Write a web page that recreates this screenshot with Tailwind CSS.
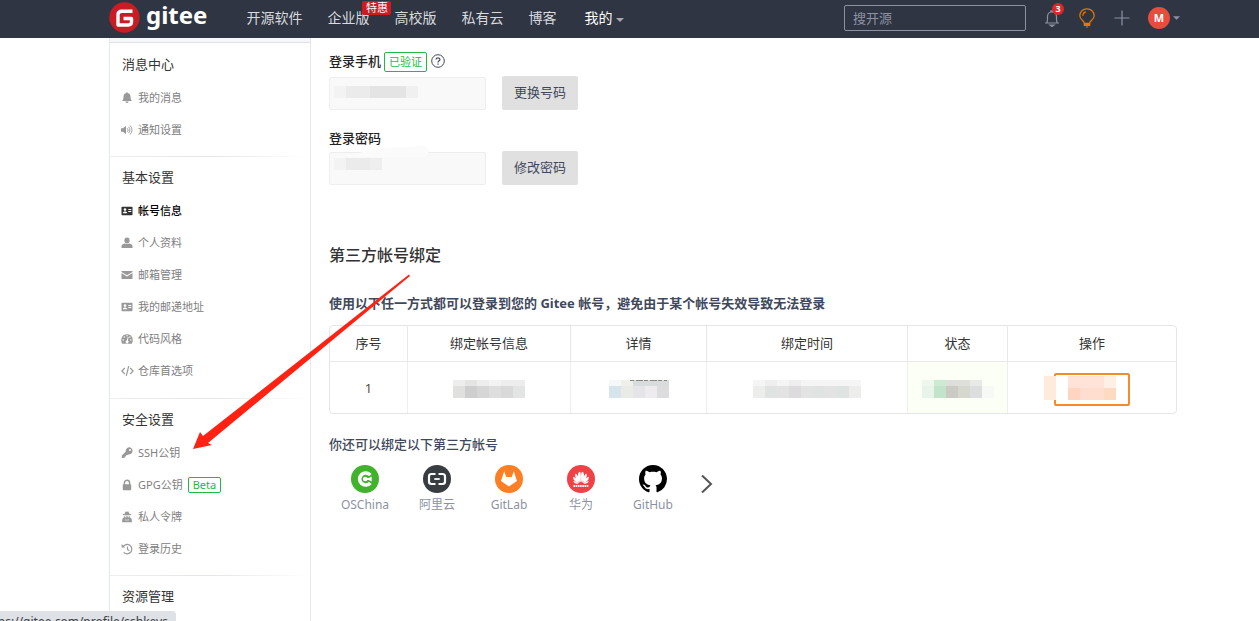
<!DOCTYPE html>
<html lang="zh-CN">
<head>
<meta charset="utf-8">
<title>帐号信息 - Gitee</title>
<script src="https://cdn.jsdelivr.net/npm/@tailwindcss/browser@4"></script>
</head>
<body class="relative h-screen overflow-hidden flex flex-col bg-white text-[13px] text-[#333] font-['Noto_Sans','Noto_Sans_CJK_SC',sans-serif]">

<header class="h-[38px] shrink-0 bg-[#2f3542] pl-[109px] pr-[79px] pb-0.5 flex items-center text-sm text-[#d8dade]">
  <a href="#" class="flex items-center gap-[6px] text-white" aria-label="gitee">
    <svg class="size-[31px] mt-[-2px]" viewBox="0 0 31 31"><circle cx="15.5" cy="15.5" r="15.2" fill="#c71d23"/><path d="M23.5 9.2H12.8Q9 9.2 9 13v10h10.3Q22.5 23 22.5 19.800v-3.300H14.500" fill="none" stroke="#fff" stroke-width="3.400" stroke-linejoin="round"/></svg>
    <span class="text-2xl leading-8 font-bold pb-[6px]">gitee</span>
  </a>
  <nav class="ml-[39px] flex items-center gap-[25px]">
    <a href="#">开源软件</a>
    <a href="#" class="relative">企业版<span class="absolute left-[35px] -top-[7px] w-[29px] h-[14px] rounded-xs bg-[#c71d23] text-white text-[11px] leading-[14px] text-center">特惠</span></a>
    <a href="#">高校版</a>
    <a href="#">私有云</a>
    <a href="#">博客</a>
  </nav>
  <button class="ml-7 flex items-center gap-1 text-white">我的
    <svg class="w-2 h-1 mt-1" viewBox="0 0 8 4"><path d="M0 0h8L4 4z" fill="#a4a8b0"/></svg>
  </button>
  <input type="search" aria-label="搜开源" placeholder="搜开源" class="ml-auto w-[182px] h-[26px] rounded-xs border border-[#8c92a4] px-2 text-[13px] placeholder:text-[#8c92a4]">
  <div class="ml-[17px] flex items-center gap-[17px]">
    <button class="relative" aria-label="通知">
      <svg class="size-[18px]" viewBox="0 0 18 18" fill="none" stroke="#8c92a4" stroke-width="1.200"><path d="M2 14h14M3.500 14c.8-1 1-2 1-3.500V7.500C4.500 4.500 6.500 3 9 3s4.500 1.500 4.500 4.500v3c0 1.500.2 2.500 1 3.500M8 3V1.800h2V3"/><path d="M7 16h4l-2 1.500z" fill="#8c92a4"/></svg>
      <span class="absolute left-[9px] -top-[6px] size-3 rounded-full bg-[#db2828] text-white text-[9px] leading-3 font-bold text-center">3</span>
    </button>
    <button aria-label="提示">
      <svg class="w-[18px] h-5" viewBox="0 0 18 20" fill="none" stroke="#e67700" stroke-width="1.200"><path d="M6.300 15.300C6.300 12.500 1.800 11.800 1.800 7.700A7 7 0 0 1 9 .8a7 7 0 0 1 7.200 6.900c0 4.100-4.500 4.800-4.500 7.600zM4.800 7.800c0-2.200 1.300-3.600 3-4"/><path d="M6.300 16h5.400v1.500H6.300zM7.800 19h2.400" fill="#e67700"/></svg>
    </button>
    <button aria-label="新建"><svg class="size-[18px]" viewBox="0 0 18 18"><path d="M9 1.500v15M1.500 9h15" stroke="#8c92a4" stroke-width="1.200"/></svg></button>
    <button class="flex items-center gap-[3px]" aria-label="用户菜单">
      <span class="size-[22px] rounded-full bg-[#e74c3c] text-white text-[11px] leading-[22px] font-bold text-center">M</span>
      <svg class="w-[7px] h-1" viewBox="0 0 8 4"><path d="M0 0h8L4 4z" fill="#8c92a4"/></svg>
    </button>
  </div>
</header>

<div class="flex-1 min-h-0 flex pl-[109px] pr-[82px]">
  <aside class="w-[202px] shrink-0 border-x border-[#e3e9ed] overflow-hidden text-[11px] text-[#808080]">
    <div class="h-[5px] bg-[#f7f7f9] border-b border-[#dce3e8]"></div>
    <nav class="pt-1">
      <section>
        <h2 class="h-[35px] pl-3 flex items-center text-[13px] text-[#333]">消息中心</h2>
        <a href="#" class="h-8 pl-[11px] flex items-center gap-[5px]"><svg class="size-3 text-[#999]" viewBox="0 0 12 12" fill="currentColor"><path d="M5.300 1a.7.7 0 0 1 1.400 0c2 .4 2.800 1.800 2.800 3.800C9.500 7 10 8 11 9H1c1-1 1.500-2 1.500-4.200 0-2 .8-3.400 2.800-3.800zM4.500 9.600h3a1.500 1.500 0 0 1-3 0z"/></svg>我的消息</a>
        <a href="#" class="h-8 pl-[11px] flex items-center gap-[5px]"><svg class="size-3 text-[#999]" viewBox="0 0 12 12" fill="currentColor"><path d="M0 4.200h2L5 1.700v8.600L2 7.800H0z"/><path d="M6.200 4.200a2.400 2.400 0 0 1 0 3.600M7.500 2.800a4.400 4.400 0 0 1 0 6.400M9 1.400a6.300 6.300 0 0 1 0 9.200" fill="none" stroke="currentColor" stroke-width=".9"/></svg>通知设置</a>
      </section>
      <hr class="mt-[10px] mb-[3px] h-px border-0 bg-linear-to-r from-[#eceef0] via-[#e3e5e8] to-white">
      <section>
        <h2 class="h-[35px] pl-3 flex items-center text-[13px] text-[#333]">基本设置</h2>
        <a href="#" class="h-8 pl-[11px] flex items-center gap-[5px] text-black font-medium"><svg class="size-3 text-[#333]" viewBox="0 0 12 12"><rect x=".5" y="1.800" width="11" height="8.400" rx=".8" fill="currentColor"/><g fill="#fff"><circle cx="4" cy="4.600" r="1.300"/><path d="M1.800 8.200c0-2.400 4.400-2.400 4.400 0zM7.300 4h3v1h-3zM7.300 6h3v1h-3z"/></g></svg>帐号信息</a>
        <a href="#" class="h-8 pl-[11px] flex items-center gap-[5px]"><svg class="size-3 text-[#999]" viewBox="0 0 12 12" fill="currentColor"><ellipse cx="6" cy="3.400" rx="2.600" ry="3"/><path d="M.5 11V9.200C.5 7.500 2.600 6.900 4 6.500c1 .8 3 .8 4 0 1.400.4 3.500 1 3.500 2.700V11z"/></svg>个人资料</a>
        <a href="#" class="h-8 pl-[11px] flex items-center gap-[5px]"><svg class="size-3 text-[#999]" viewBox="0 0 12 12" fill="currentColor"><path d="M.5 2h11v1L6 6.300.5 3zM.5 4.100 6 7.500l5.500-3.400V10H.5z"/></svg>邮箱管理</a>
        <a href="#" class="h-8 pl-[11px] flex items-center gap-[5px]"><svg class="size-3 text-[#999]" viewBox="0 0 12 12"><rect x=".5" y="1.800" width="11" height="8.400" rx=".8" fill="currentColor"/><g fill="#fff"><circle cx="4" cy="4.600" r="1.300"/><path d="M1.800 8.200c0-2.400 4.400-2.400 4.400 0zM7.300 4h3v1h-3zM7.300 6h3v1h-3z"/></g></svg>我的邮递地址</a>
        <a href="#" class="h-8 pl-[11px] flex items-center gap-[5px]"><svg class="size-3 text-[#999]" viewBox="0 0 12 12"><path d="M1.200 10.800C-.9 7 .6 1.200 6 1.200s6.900 5.800 4.800 9.600z" fill="currentColor"/><g fill="#fff"><circle cx="2.200" cy="7" r=".8"/><circle cx="3.300" cy="4" r=".8"/><circle cx="6" cy="2.800" r=".7"/><circle cx="9.800" cy="7" r=".8"/><circle cx="8.900" cy="4" r=".7"/><path d="m6.800 3.800.8.200-.7 3.500a1.500 1.500 0 1 1-1-.2z"/></g></svg>代码风格</a>
        <a href="#" class="h-8 pl-[11px] flex items-center gap-[5px]"><svg class="w-[13px] h-3 -mr-px text-[#999]" viewBox="0 0 13 12" fill="none" stroke="currentColor" stroke-width="1.200"><path d="M3.800 3 .9 6l2.900 3M9.200 3l2.900 3-2.900 3M7.700 1.200 5.300 10.800"/></svg>仓库首选项</a>
      </section>
      <hr class="mt-[11px] mb-[3px] h-px border-0 bg-linear-to-r from-[#eceef0] via-[#e3e5e8] to-white">
      <section>
        <h2 class="h-[35px] pl-3 flex items-center text-[13px] text-[#333]">安全设置</h2>
        <a href="#" class="h-8 pl-[11px] flex items-center gap-[5px]"><svg class="size-3 text-[#999]" viewBox="0 0 12 12"><path d="M8.100.3a3.600 3.600 0 1 1-1 7.100L6.200 8.300H5v1.300H3.700v1.300H.8V8.600l4-4A3.600 3.600 0 0 1 8.100.3z" fill="currentColor"/><circle cx="9" cy="3.100" r="1" fill="#fff"/></svg>SSH公钥</a>
        <a href="#" class="h-8 pl-[11px] flex items-center gap-[5px]"><svg class="size-3 text-[#999]" viewBox="0 0 12 12"><rect x="1.800" y="5.200" width="8.400" height="6" rx=".6" fill="currentColor"/><path d="M3.400 6V3.900a2.600 2.600 0 0 1 5.200 0V6" fill="none" stroke="currentColor" stroke-width="1.400"/></svg>GPG公钥<span class="h-4 px-1 rounded-xs border border-[#21ba45] text-[#21ba45] leading-[14px]">Beta</span></a>
        <a href="#" class="h-8 pl-[11px] flex items-center gap-[5px]"><svg class="size-3 text-[#999]" viewBox="0 0 12 12"><path d="M3.700 2.700 4.500.5l1.500.3 1.500-.3.800 2.200 1.900.6v.8H1.800v-.8zM2.700 4.800h6.600L9 6.500l1.500.9.500 3.800H1l.5-3.800L3 6.500z" fill="currentColor"/><path d="M3.500 5.200h2v1h-2zM6.500 5.200h2v1h-2zM4.300 8l1.200.8-.5 1.800zM7.700 8l-1.200.8.5 1.800z" fill="#fff"/></svg>私人令牌</a>
        <a href="#" class="h-8 pl-[11px] flex items-center gap-[5px]"><svg class="size-3 text-[#999]" viewBox="0 0 12 12" fill="none" stroke="currentColor" stroke-width="1.200"><path d="M2 3.800a4.700 4.700 0 1 1 .6 5.500M6.500 3.500v3l1.800 1.200"/><path d="M.6.900v3.600h3.600z" fill="currentColor" stroke="none"/></svg>登录历史</a>
      </section>
      <hr class="mt-[10px] mb-[3px] h-px border-0 bg-linear-to-r from-[#eceef0] via-[#e3e5e8] to-white">
      <section>
        <h2 class="h-[35px] pl-3 flex items-center text-[13px] text-[#333]">资源管理</h2>
      </section>
    </nav>
  </aside>

  <main class="flex-1 min-w-0 pl-[18px] pt-[14px]">
    <form class="flex flex-col">
      <div class="flex items-center gap-[3px] h-5">
        <label for="phone" class="font-medium text-[#222]">登录手机</label>
        <span class="h-5 px-1 rounded-xs border border-[#21ba45] text-[#21ba45] text-[11px] leading-[18px]">已验证</span>
        <svg class="size-[14px] ml-px mb-[3px]" viewBox="0 0 14 14" fill="none" stroke="#40485b"><circle cx="7" cy="7" r="6.300"/><path d="M5.100 5.600c0-2.500 3.900-2.300 3.900 0C9 6.900 7 6.800 7 8.400M7 9.500v1.300" stroke-width="1.200"/></svg>
      </div>
      <div class="mt-1 flex items-center gap-4">
        <div class="relative w-[157px] h-[33px]">
          <input id="phone" disabled class="size-full rounded-xs border border-[#eee] bg-[#f9f9f9]">
          <svg class="absolute left-[5px] top-[9px] w-[84px] h-3" viewBox="0 0 7 1" preserveAspectRatio="none" shape-rendering="crispEdges"><path fill="#f3f3f3" d="M0 0h1v1H0z"/><path fill="#ebebeb" d="M1 0h2v1H1z"/><path fill="#e4e4e4" d="M3 0h3v1H3z"/><path fill="#f0f0f0" d="M6 0h1v1H6z"/></svg>
        </div>
        <button type="button" class="w-[76px] h-[34px] rounded-xs bg-[#e0e0e0] text-[#40485b]">更换号码</button>
      </div>
      <label for="pwd" class="mt-[18px] h-5 leading-5 font-medium text-[#222]">登录密码</label>
      <div class="mt-[3px] flex items-center gap-4">
        <div class="relative w-[157px] h-[33px]">
          <input id="pwd" disabled class="size-full rounded-xs border border-[#eee] bg-[#f9f9f9]">
          <svg class="absolute left-[5px] -top-[6px] w-[95px] h-3" viewBox="0 0 95 12"><path d="M0 11 22 8Q45 0 70 1l22-1 3 5-3 6z" fill="#fbfbfb"/></svg>
          <svg class="absolute left-[5px] top-[6px] w-12 h-3" viewBox="0 0 4 1" preserveAspectRatio="none" shape-rendering="crispEdges"><path fill="#f3f3f3" d="M0 0h1v1H0z"/><path fill="#ebebeb" d="M1 0h2v1H1z"/><path fill="#eee" d="M3 0h1v1H3z"/></svg>
        </div>
        <button type="button" class="w-[76px] h-[34px] rounded-xs bg-[#e0e0e0] text-[#40485b]">修改密码</button>
      </div>
    </form>

    <h3 class="mt-[58px] text-base leading-6 font-medium text-[#333]">第三方帐号绑定</h3>
    <p class="mt-[26px] leading-5 font-bold text-[#40485b]">使用以下任一方式都可以登录到您的 Gitee 帐号，避免由于某个帐号失效导致无法登录</p>

    <table class="mt-3 w-[848px] max-w-full table-fixed border-separate border-spacing-0 rounded-sm border border-[#e3e6e8] text-center">
      <colgroup><col class="w-[78px]"><col class="w-[163px]"><col class="w-[136px]"><col class="w-[201px]"><col class="w-[100px]"><col></colgroup>
      <thead>
        <tr class="h-9 *:font-normal *:border-b *:border-[#e8e8e8]">
          <th class="border-r">序号</th><th class="border-r">绑定帐号信息</th><th class="border-r">详情</th><th class="border-r">绑定时间</th><th class="border-r">状态</th><th>操作</th>
        </tr>
      </thead>
      <tbody>
        <tr class="h-[51px] *:border-[#eee] *:pt-[3px]">
          <td class="border-r text-[#5a4a42]">1</td>
          <td class="border-r"><svg class="mx-auto w-[72px] h-[18px]" viewBox="0 0 72 18" shape-rendering="crispEdges"><path fill="#ededee" d="M0 0h72v6H0z"/><path fill="#e4e4e2" d="M12 0h12v6H12z"/><path fill="#f3f3f3" d="M36 0h12v6H36z"/><path fill="#e0e0df" d="M0 6h12v12H0z"/><path fill="#cdcecd" d="M12 6h12v12H12z"/><path fill="#d6d6d6" d="M24 6h12v12H24z"/><path fill="#dedede" d="M36 6h12v12H36z"/><path fill="#d9d9d9" d="M48 6h12v12H48z"/><path fill="#e3e4e6" d="M60 6h12v12H60z"/></svg></td>
          <td class="border-r"><svg class="mx-auto w-[60px] h-[18px]" viewBox="0 0 60 18" shape-rendering="crispEdges"><path fill="#f5f7f8" d="M0 0h12v6H0z"/><path fill="#efefec" d="M12 0h12v6H12z"/><path fill="#d9dcdd" d="M24 0h36v6H24z"/><path stroke="#888780" stroke-dasharray="4 2 7 1" d="M21 .5h37"/><path fill="#d8e4eb" d="M0 6h12v12H0z"/><path fill="#e9ebe7" d="M12 6h12v12H12z"/><path fill="#e5e5e9" d="M24 6h12v12H24z"/><path fill="#edebed" d="M36 6h12v12H36z"/><path fill="#dcdcdf" d="M48 6h12v12H48z"/></svg></td>
          <td class="border-r"><svg class="mx-auto w-[108px] h-[18px]" viewBox="0 0 108 18" shape-rendering="crispEdges"><path fill="#f5f5f5" d="M0 0h108v6H0z"/><path fill="#eeeeef" d="M12 0h12v6H12zM36 0h12v6H36z"/><path fill="#ededeb" d="M0 6h12v12H0zM96 6h12v12H96z"/><path fill="#dfe4e3" d="M12 6h12v12H12zM60 6h12v12H60zM84 6h12v12H84z"/><path fill="#e4e3e4" d="M24 6h12v12H24zM48 6h12v12H48zM72 6h12v12H72z"/><path fill="#dddbdd" d="M36 6h12v12H36z"/></svg></td>
          <td class="border-r bg-[#fcfff5]"><svg class="mx-auto w-[72px] h-[18px]" viewBox="0 0 72 18" shape-rendering="crispEdges"><path fill="#edf7ee" d="M0 0h12v6H0z"/><path fill="#cdead3" d="M12 0h12v6H12z"/><path fill="#dededa" d="M24 0h24v6H24z"/><path fill="#e8eae7" d="M48 0h12v6H48z"/><path fill="#e8f4e9" d="M0 6h12v12H0z"/><path fill="#c2e4ca" d="M12 6h12v12H12z"/><path fill="#cbcac4" d="M24 6h12v12H24z"/><path fill="#d6d8d0" d="M36 6h12v12H36z"/><path fill="#dddfdf" d="M48 6h12v12H48z"/><path fill="#f6f9f5" d="M60 6h12v12H60z"/></svg></td>
          <td><button class="relative block mx-auto w-[76px] h-[33px] rounded-xs border-2 border-[#f68b2c]" aria-label="操作"><svg class="absolute -left-3 top-px w-[84px] h-6" viewBox="0 0 84 24" shape-rendering="crispEdges"><path fill="#fff" d="M12 0h72v24H12z"/><path fill="#ffeadc" d="M0 0h12v24H0z"/><path fill="#ffe3d8" d="M24 0h36v12H24z"/><path fill="#fff0e6" d="M60 0h12v12H60z"/><path fill="#fdd5c0" d="M24 12h12v12H24z"/><path fill="#ffded0" d="M36 12h24v12H36z"/><path fill="#fddbc2" d="M60 12h12v12H60z"/></svg></button></td>
        </tr>
      </tbody>
    </table>

    <h4 class="mt-5 leading-5 font-medium text-[#40485b]">你还可以绑定以下第三方帐号</h4>
    <div class="mt-[11px] flex items-start text-xs leading-4 text-[#8c92a4]">
      <a href="#" class="w-[72px] flex flex-col items-center gap-1"><svg class="size-7" viewBox="0 0 28 28" aria-hidden="true"><circle cx="14" cy="14" r="14" fill="#41b22b"/><path d="M19.300 10.200A6 6 0 1 0 19.300 17.800" fill="none" stroke="#fff" stroke-width="3.600"/><circle cx="14.200" cy="14" r="2.300" fill="#fff"/><path d="M14.500 13h3.200l3-1.600v5.200l-3-1.600h-3.200z" fill="#fff"/></svg>OSChina</a>
      <a href="#" class="w-[72px] flex flex-col items-center gap-1"><svg class="size-7" viewBox="0 0 28 28" aria-hidden="true"><circle cx="14" cy="14" r="14" fill="#373d41"/><path d="M12.500 9H8.500Q6 9 6 11.500v5Q6 19 8.500 19h4M15.500 9h4Q22 9 22 11.500v5Q22 19 19.500 19h-4" fill="none" stroke="#fff" stroke-width="2.200"/><path d="M11.300 14h5.400" stroke="#fff" stroke-width="1.800"/></svg>阿里云</a>
      <a href="#" class="w-[72px] flex flex-col items-center gap-1"><svg class="size-7" viewBox="0 0 28 28" aria-hidden="true"><circle cx="14" cy="14" r="14" fill="#fd7e23"/><path d="m9.200 6.300 2.100 5.700h5.400l2.100-5.700 3.200 9.600L14 21.500l-8-5.600z" fill="#fff"/></svg>GitLab</a>
      <a href="#" class="w-[72px] flex flex-col items-center gap-1"><svg class="size-7" viewBox="0 0 28 28" aria-hidden="true"><circle cx="14" cy="14" r="14" fill="#ef4146"/><g fill="#fff"><path id="petal" d="M13.700 17.500c-2.700-4-3.900-8.800-1.200-10.800 1.600-.3 1.600 5.500 1.200 10.800zM13 17.700C9.500 15.300 7 11.500 8.700 8.600c1.800.6 3.500 5.500 4.300 9.100zM12.300 18c-3.600-.4-6.600-3.300-6.100-6.200 2 .2 4.600 3.700 6.100 6.200zM11.700 18.500c-2.500.7-4.900-.5-5.400-2.600 1.600 0 3.700 1.500 5.400 2.600z"/><use href="#petal" transform="matrix(-1 0 0 1 28 0)"/></g><path d="M6.500 21h15" stroke="#fff" stroke-width="1.800" stroke-dasharray="1.600 .6"/></svg>华为</a>
      <a href="#" class="w-[72px] flex flex-col items-center gap-1"><svg class="size-7" viewBox="0 0 16 16" aria-hidden="true"><path d="M8 0C3.580 0 0 3.580 0 8c0 3.540 2.290 6.530 5.470 7.590.4.070.55-.17.55-.38 0-.19-.01-.82-.01-1.490-2.010.37-2.530-.49-2.690-.94-.09-.23-.48-.94-.82-1.130-.28-.15-.68-.52-.01-.53.63-.01 1.080.58 1.230.82.72 1.210 1.870.87 2.330.66.070-.52.28-.87.51-1.070-1.780-.2-3.640-.89-3.640-3.950 0-.87.31-1.590.82-2.150-.08-.2-.36-1.020.08-2.120 0 0 .67-.21 2.200.82.640-.18 1.320-.27 2-.27s1.360.09 2 .27c1.530-1.040 2.200-.82 2.200-.82.44 1.100.16 1.920.08 2.120.51.56.82 1.270.82 2.150 0 3.070-1.870 3.750-3.650 3.950.29.25.54.73.54 1.480 0 1.070-.01 1.930-.01 2.200 0 .21.15.46.55.38A8.010 8.010 0 0 0 16 8c0-4.420-3.580-8-8-8z"/></svg>GitHub</a>
      <button class="ml-3 mt-[9px]" aria-label="更多"><svg class="w-3 h-5" viewBox="0 0 12 20" fill="none"><path d="m1 1.500 9 8.500-9 8.500" stroke="#555" stroke-width="2"/></svg></button>
    </div>
  </main>
</div>

<svg class="absolute left-[192px] top-[274px] w-[220px] h-[176px] pointer-events-none" viewBox="192 274 220 176" aria-hidden="true"><path d="M409 274.500 203 436l-3-4-7 17 19-4-4-2L410 276z" fill="#ff2213"/></svg>

<div class="absolute left-0 bottom-0 w-[176px] h-[10px] overflow-hidden rounded-tr bg-[#dee1e6] text-xs text-[#3c4043]">
  <div class="flex justify-end pr-2 pt-[3px] leading-4 whitespace-nowrap">https://gitee.com/profile/sshkeys</div>
</div>
</body>
</html>
